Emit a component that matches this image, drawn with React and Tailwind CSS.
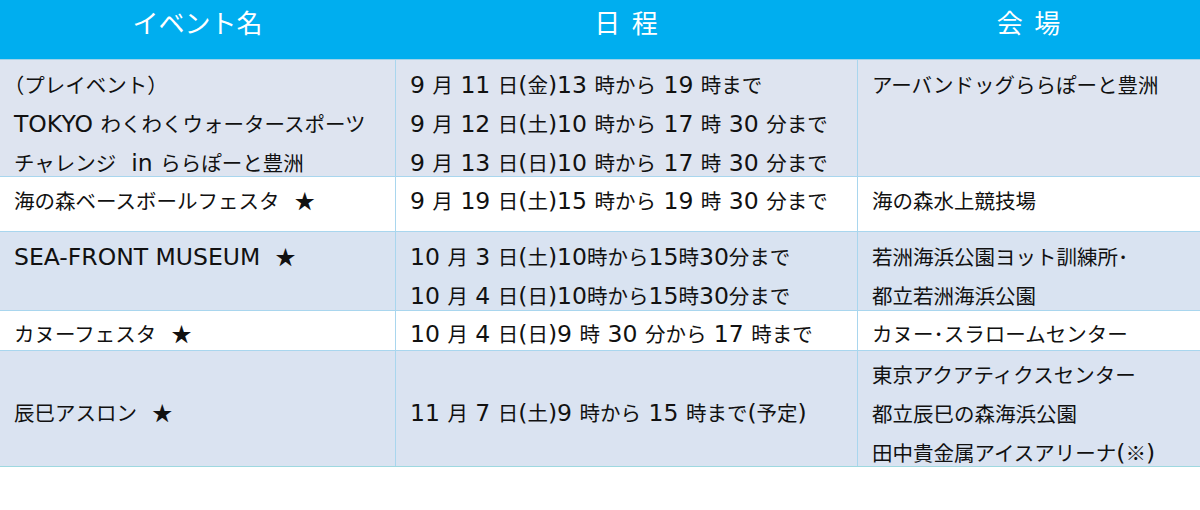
import React from "react";

const rows = [
  {
    bg: "bg-[#dee4f0]",
    h: "h-[117px]",
    name: ["（プレイベント）", "TOKYO わくわくウォータースポーツ", "チャレンジ  in ららぽーと豊洲"],
    date: ["9 月 11 日(金)13 時から 19 時まで", "9 月 12 日(土)10 時から 17 時 30 分まで", "9 月 13 日(日)10 時から 17 時 30 分まで"],
    place: ["アーバンドッグららぽーと豊洲"],
    pt: "pt-[5px]",
  },
  {
    bg: "bg-white",
    h: "h-[55px]",
    name: ["海の森ベースボールフェスタ  ★"],
    date: ["9 月 19 日(土)15 時から 19 時 30 分まで"],
    place: ["海の森水上競技場"],
    pt: "pt-[4px]",
  },
  {
    bg: "bg-[#d9e3f1]",
    h: "h-[79px]",
    name: ["SEA-FRONT MUSEUM  ★"],
    date: ["10 月 3 日(土)10時から15時30分まで", "10 月 4 日(日)10時から15時30分まで"],
    place: ["若洲海浜公園ヨット訓練所･", "都立若洲海浜公園"],
    pt: "pt-[5px]",
  },
  {
    bg: "bg-white",
    h: "h-[40px]",
    name: ["カヌーフェスタ  ★"],
    date: ["10 月 4 日(日)9 時 30 分から 17 時まで"],
    place: ["カヌー･スラロームセンター"],
    pt: "pt-[3px]",
  },
  {
    bg: "bg-[#dae3f1]",
    h: "h-[116px]",
    name: ["辰巳アスロン  ★"],
    date: ["11 月 7 日(土)9 時から 15 時まで(予定)"],
    place: ["東京アクアティクスセンター", "都立辰巳の森海浜公園", "田中貴金属アイスアリーナ(※)"],
    pt: "pt-[4px]",
    midPt: "pt-[42px]",
  },
];

// latin runs get a wider face, like the original's mixed font
function Mixed({ text }) {
  const parts = text.split(/([\x20-\x7E]+|[（）])/).filter(Boolean);
  return parts.map((p, i) => {
    if (/^[\x20-\x7E]+$/.test(p))
      return (
        <span key={i} className="text-[23.5px]" style={{ fontFamily: '"DejaVu Sans", sans-serif' }}>
          {p}
        </span>
      );
    if (p === "（" || p === "）")
      return (
        <span key={i} className="[font-feature-settings:'halt']">
          {p}
        </span>
      );
    return <span key={i}>{p}</span>;
  });
}

function Cell({ lines, pt, className }) {
  return (
    <div className={`flex flex-col min-h-0 ${pt} ${className}`}>
      {lines.map((l, i) => (
        <div key={i} className="h-[39px] shrink-0 leading-[39px] whitespace-pre">
          <Mixed text={l} />
        </div>
      ))}
    </div>
  );
}

export default function App() {
  return (
    <div
      className="w-[1200px] h-[510px] bg-white text-[#111] text-[20.5px]"
      style={{ fontFamily: '"Noto Sans CJK JP", "Noto Sans", sans-serif' }}
    >
      <div className="grid grid-cols-[395px_462px_343px] h-[60px] bg-[#00aeef] text-white text-[26px] border-b border-[#9fd3ea]">
        <div className="flex items-center justify-center pb-[16px]">イベント名</div>
        <div className="flex items-center justify-center pb-[16px] whitespace-pre">日  程</div>
        <div className="flex items-center justify-center pb-[16px] whitespace-pre">会  場</div>
      </div>
      {rows.map((r, i) => (
        <div
          key={i}
          className={`grid grid-cols-[395px_462px_343px] grid-rows-[100%] ${r.h} ${r.bg} border-b ${i === rows.length - 1 ? "border-[#9ed8e0]" : "border-[#a9d6ee]"}`}
        >
          <Cell lines={r.name} pt={r.midPt || r.pt} className="pl-[14px]" />
          <Cell lines={r.date} pt={r.midPt || r.pt} className="pl-[14px] border-l border-[#a9d6ee]" />
          <Cell lines={r.place} pt={r.pt} className="pl-[14px] border-l border-[#a9d6ee]" />
        </div>
      ))}
    </div>
  );
}
